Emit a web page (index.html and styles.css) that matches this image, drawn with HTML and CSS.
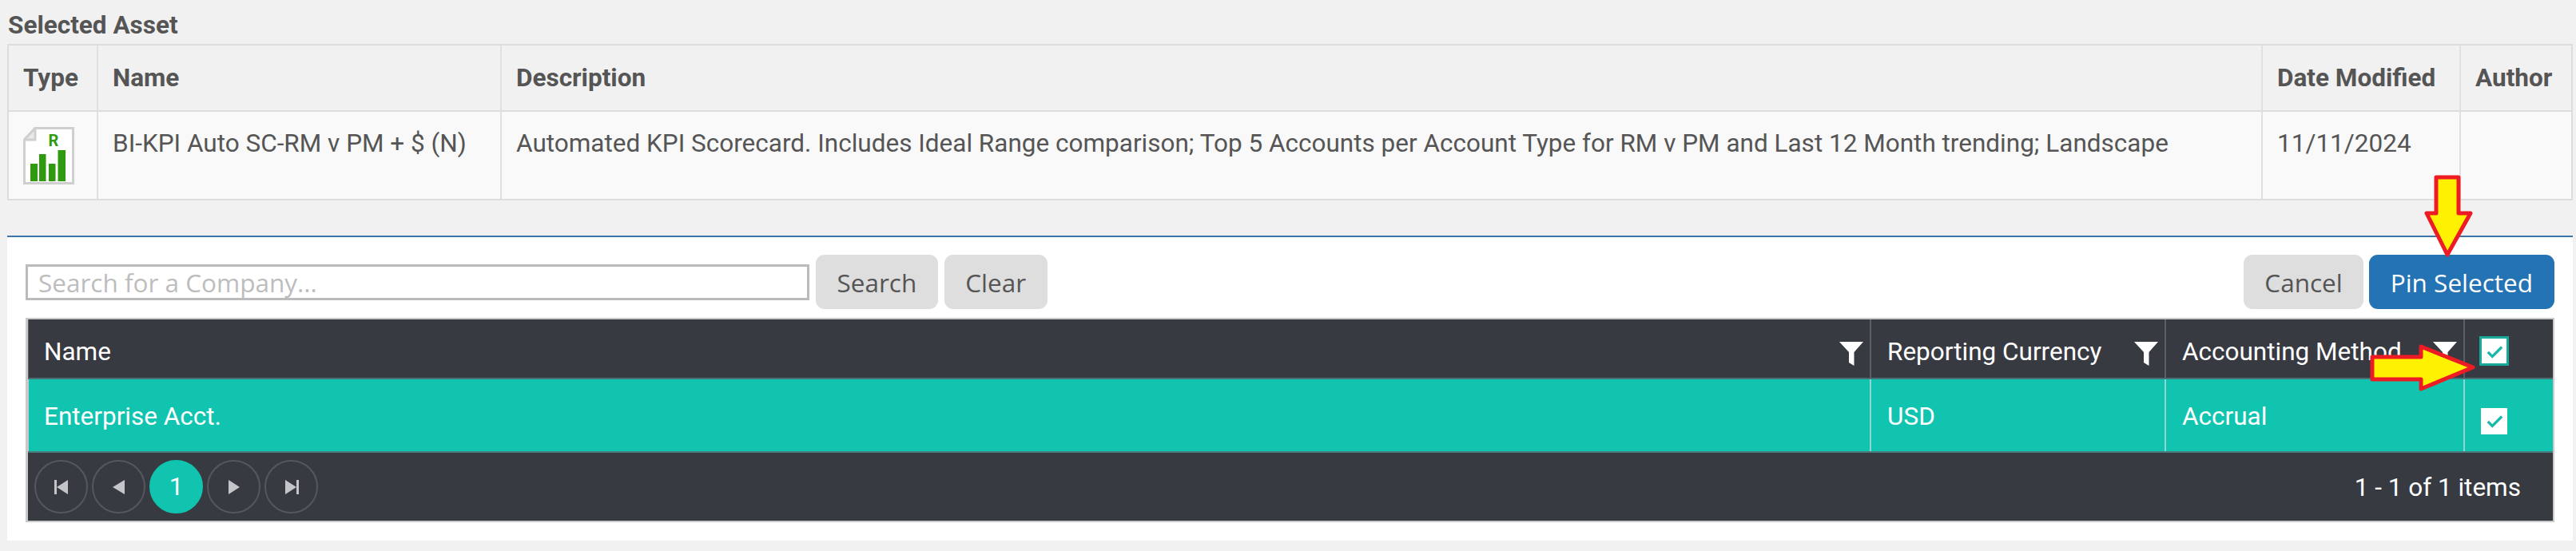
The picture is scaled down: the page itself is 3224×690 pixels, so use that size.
FILE: index.html
```html
<!DOCTYPE html>
<html lang="en">
<head>
<meta charset="utf-8">
<title>Selected Asset</title>
<link rel="stylesheet" href="styles.css">
</head>
<body>
<main class="page">
  <h2 class="title">Selected Asset</h2>
  <div class="asset">
    <div class="asset-row asset-head">
      <div class="cell">Type</div>
      <div class="cell">Name</div>
      <div class="cell">Description</div>
      <div class="cell">Date Modified</div>
      <div class="cell">Author</div>
    </div>
    <div class="asset-row asset-body">
      <div class="cell icon-cell">
        <svg class="report-icon" viewBox="0 0 64 72" aria-hidden="true">
          <path d="M15 1.5H62.5V70.5H1.5V16Z" fill="#fff" stroke="#cfcfcf" stroke-width="3"/>
          <path d="M1.5 16L15 1.5V16Z" fill="#e9e9e9" stroke="#cfcfcf" stroke-width="3"/>
          <text x="38" y="24" class="report-r">R</text>
          <rect x="9" y="46" width="9" height="22" fill="#2f9a10"/>
          <rect x="20" y="34" width="8.500" height="34" fill="#2f9a10"/>
          <rect x="32" y="46" width="8.500" height="22" fill="#2f9a10"/>
          <rect x="43.500" y="29" width="9.500" height="39" fill="#2f9a10"/>
        </svg>
      </div>
      <div class="cell">BI-KPI Auto SC-RM v PM + $ (N)</div>
      <div class="cell">Automated KPI Scorecard. Includes Ideal Range comparison; Top 5 Accounts per Account Type for RM v PM and Last 12 Month trending; Landscape</div>
      <div class="cell">11/11/2024</div>
      <div class="cell"></div>
    </div>
  </div>

  <section class="panel">
    <div class="toolbar">
      <div class="search">
        <input class="search-input" type="text" placeholder="Search for a Company...">
        <button class="btn">Search</button>
        <button class="btn">Clear</button>
      </div>
      <div class="actions">
        <button class="btn btn-cancel">Cancel</button>
        <button class="btn btn-primary">Pin Selected</button>
      </div>
    </div>

    <div class="grid">
      <div class="grid-row grid-head">
        <div class="gcell">Name<svg class="funnel" viewBox="0 0 30 30"><path d="M0 0H30L18.500 13V30L12 26V13Z" fill="#fff"/></svg></div>
        <div class="gcell">Reporting Currency<svg class="funnel" viewBox="0 0 30 30"><path d="M0 0H30L18.500 13V30L12 26V13Z" fill="#fff"/></svg></div>
        <div class="gcell">Accounting Method<svg class="funnel" viewBox="0 0 30 30"><path d="M0 0H30L18.500 13V30L12 26V13Z" fill="#fff"/></svg></div>
        <div class="gcell gcheck">
          <span class="check check-head"><svg viewBox="0 0 24 24"><path d="M3 13L9 19L22 6" fill="none" stroke="#19b8a8" stroke-width="3.500"/></svg></span>
        </div>
      </div>
      <div class="grid-row grid-data">
        <div class="gcell">Enterprise Acct.</div>
        <div class="gcell">USD</div>
        <div class="gcell">Accrual</div>
        <div class="gcell gcheck">
          <span class="check"><svg viewBox="0 0 24 24"><path d="M3 13L9 19L22 6" fill="none" stroke="#19b8a8" stroke-width="3.500"/></svg></span>
        </div>
      </div>
      <div class="pager">
        <div class="pages">
          <span class="page-btn"><svg viewBox="0 0 18 18"><path d="M0 0H3V18H0ZM3 9L17 0V18Z" fill="#c3c5c8"/></svg></span>
          <span class="page-btn"><svg viewBox="0 0 18 18"><path d="M1 9L16 0V18Z" fill="#c3c5c8"/></svg></span>
          <span class="page-btn page-current">1</span>
          <span class="page-btn"><svg viewBox="0 0 18 18"><path d="M16 9L2 0V18Z" fill="#c3c5c8"/></svg></span>
          <span class="page-btn"><svg viewBox="0 0 18 18"><path d="M18 0H15V18H18ZM15 9L1 0V18Z" fill="#c3c5c8"/></svg></span>
        </div>
        <span class="page-info">1 - 1 of 1 items</span>
      </div>
    </div>
  </section>

  <svg class="arrow arrow-down" viewBox="0 0 64 104" aria-hidden="true">
    <path d="M15 3H43V48H58L29 100L3 48H15Z" fill="#fff200" stroke="#ed1c24" stroke-width="5" stroke-linejoin="round"/>
  </svg>
  <svg class="arrow arrow-right" viewBox="0 0 134 62" aria-hidden="true">
    <path d="M3 17H64V4L129 30L64 57V45H3Z" fill="#fff200" stroke="#ed1c24" stroke-width="5" stroke-linejoin="round"/>
  </svg>
</main>
</body>
</html>
```
FILE: styles.css
```css
* { box-sizing: border-box; }
html, body { margin: 0; padding: 0; }
body {
  background: #f1f1f1;
  font-family: Roboto, "Liberation Sans", sans-serif;
  color: #555;
}
.page {
  position: relative;
  width: 3224px;
  height: 690px;
  padding: 0 4px 0 9px;
  overflow: hidden;
}
.title {
  margin: 0;
  height: 55px;
  padding: 15px 0 0 1px;
  font-size: 31.5px;
  line-height: 34px;
  font-weight: 700;
  color: #555;
}
.asset {
  width: 3211px;
  border: 2px solid #ddd;
}
.asset-row {
  display: grid;
  grid-template-columns: 110px 505px 2204px 248px 1fr;
}
.asset-head {
  height: 83px;
  font-weight: 700;
  border-bottom: 2px solid #ddd;
  background: #f1f1f1;
  font-size: 31.5px;
}
.asset-body {
  height: 109px;
  background: #f9f9f9;
  font-size: 31.5px;
}
.cell {
  border-left: 2px solid #e0e0e0;
  padding: 0 18px;
  display: flex;
  align-items: center;
  white-space: nowrap;
}
.cell:first-child { border-left: 0; }
.asset-body .cell { align-items: flex-start; padding-top: 22px; line-height: 36px; }
.asset-body .icon-cell { padding: 19px 0 0 18px; }
.report-icon { width: 64px; height: 72px; display: block; }
.report-r {
  font-family: Roboto, sans-serif;
  font-size: 20px;
  font-weight: 700;
  fill: #2f9a10;
  text-anchor: middle;
}
.panel {
  margin-top: 44px;
  width: 3211px;
  height: 382px;
  background: #fff;
  border-top: 2px solid #3a77a8;
  padding: 22px 23px 0 23px;
}
.toolbar {
  display: flex;
  justify-content: space-between;
  align-items: flex-start;
  height: 79px;
}
.search, .actions { display: flex; align-items: flex-start; }
.search-input {
  width: 981px;
  height: 45px;
  margin: 12px 8px 0 0;
  border: 3px solid #bbb;
  padding: 0 13px;
  font-family: "Open Sans", sans-serif;
  font-size: 31.5px;
  color: #555;
  background: #fff;
  outline: none;
}
.search-input::placeholder { color: #bdbdbd; opacity: 1; }
.btn {
  height: 68px;
  padding: 0 26.500px;
  margin-right: 8px;
  border: 0;
  border-radius: 11px;
  background: #dedede;
  color: #555;
  font-family: "Open Sans", sans-serif;
  font-size: 31.5px;
}
.btn-cancel { margin-right: 7px; padding: 0 26px; }
.actions .btn:last-child { margin-right: 0; }
.btn-primary { background: #2474b5; color: #fff; padding: 0 27px; }
.grid {
  height: 256px;
  border: 2px solid #c9c9c9;
  border-left-width: 3px;
  background: #383a42;
  color: #fff;
  font-size: 31.5px;
}
.grid-row {
  display: grid;
  grid-template-columns: 2305px 369px 374px 1fr;
}
.grid-head {
  height: 75px;
  border-bottom: 2px solid #4a6f74;
  box-shadow: inset 1px 0 #5b6068;
}
.grid-data {
  height: 92px;
  background: #10c4b0;
  border-bottom: 2px solid #4a7d80;
  box-shadow: inset 1px 0 #c9c9c9;
}
.gcell {
  display: flex;
  align-items: center;
  justify-content: space-between;
  padding: 0 8px 0 20px;
  border-left: 2px solid #5b5e69;
}
.gcell:first-child { border-left: 0; }
.grid-head .gcell { padding-top: 8px; }
.grid-data .gcell { border-left-color: #8fd8d1; padding-top: 2px; }
.funnel { width: 30px; height: 30px; flex: none; margin-top: 4px; }
.grid-head .gcheck { justify-content: flex-start; padding: 0 0 0 18px; }
.grid-data .gcheck { justify-content: flex-start; padding: 14px 0 0 20px; }
.check {
  width: 33px;
  height: 33px;
  background: #fff;
  display: flex;
  align-items: center;
  justify-content: center;
}
.check svg { width: 22px; height: 22px; flex: none; }
.check-head { width: 37px; height: 37px; border: 3px solid #17a99a; margin-top: 6px; }
.pager {
  height: 85px;
  display: flex;
  justify-content: space-between;
  align-items: center;
  padding: 0 40px 0 8px;
}
.pages { display: flex; gap: 5px; }
.page-btn {
  width: 67px;
  height: 67px;
  border: 2px solid #55575f;
  border-radius: 50%;
  display: flex;
  align-items: center;
  justify-content: center;
}
.page-btn svg { width: 18px; height: 18px; }
.page-current {
  background: #10c4b0;
  border-color: #10c4b0;
  font-size: 31.5px;
}
.page-info { font-size: 31.5px; margin-top: 2px; }
.arrow { position: absolute; }
.arrow-down { left: 3034px; top: 219px; width: 64px; height: 104px; }
.arrow-right { left: 2966px; top: 430px; width: 134px; height: 62px; }
```
